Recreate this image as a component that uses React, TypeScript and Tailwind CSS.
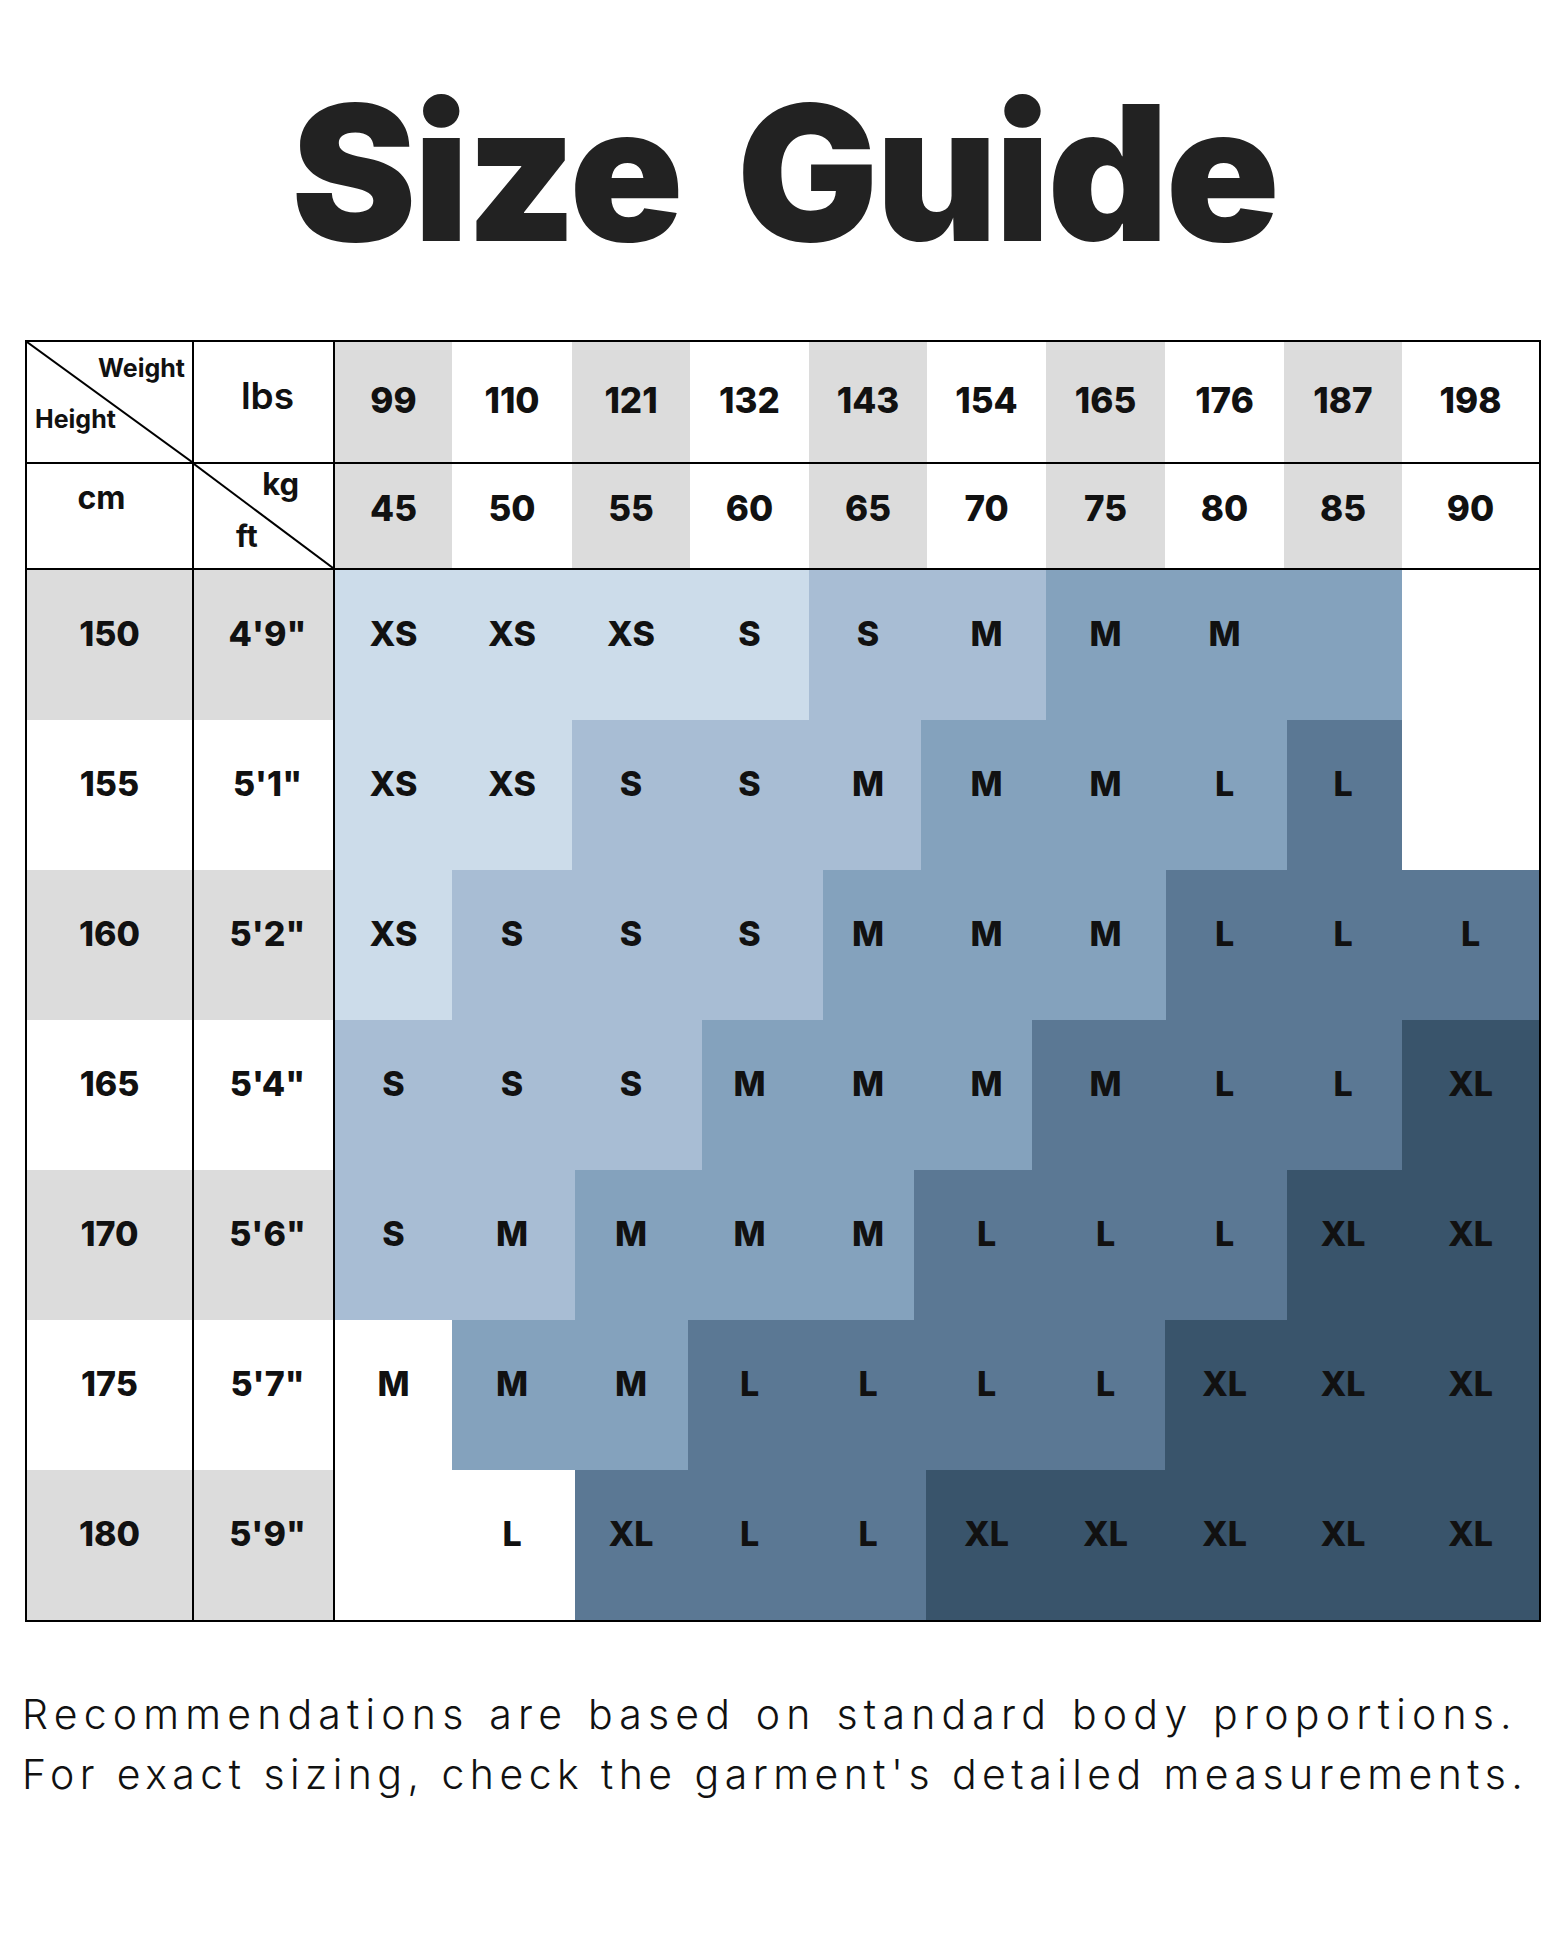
import React from "react";

const FILL: Record<number, string> = {
  0: "bg-white",
  1: "bg-[#ccdcea]",
  2: "bg-[#a8bdd4]",
  3: "bg-[#84a2bd]",
  4: "bg-[#5b7894]",
  5: "bg-[#39546b]",
};

const COLS = "grid-cols-[117px_120px_118px_119px_118px_119px_119px_119px_118px_1fr]";
const BODY_LEFT = 335;

const lbs = [99, 110, 121, 132, 143, 154, 165, 176, 187, 198];
const kg = [45, 50, 55, 60, 65, 70, 75, 80, 85, 90];

// each band: [shade, right edge in page px]
const rows: { cm: number; ft: string; sizes: string[]; bands: [number, number][] }[] = [
  { cm: 150, ft: "4'9\"", sizes: ["XS", "XS", "XS", "S", "S", "M", "M", "M", "", ""], bands: [[1, 809], [2, 1046], [3, 1402], [0, 1539]] },
  { cm: 155, ft: "5'1\"", sizes: ["XS", "XS", "S", "S", "M", "M", "M", "L", "L", ""], bands: [[1, 572], [2, 921], [3, 1287], [4, 1402], [0, 1539]] },
  { cm: 160, ft: "5'2\"", sizes: ["XS", "S", "S", "S", "M", "M", "M", "L", "L", "L"], bands: [[1, 452], [2, 823], [3, 1166], [4, 1539]] },
  { cm: 165, ft: "5'4\"", sizes: ["S", "S", "S", "M", "M", "M", "M", "L", "L", "XL"], bands: [[2, 702], [3, 1032], [4, 1402], [5, 1539]] },
  { cm: 170, ft: "5'6\"", sizes: ["S", "M", "M", "M", "M", "L", "L", "L", "XL", "XL"], bands: [[2, 575], [3, 914], [4, 1287], [5, 1539]] },
  { cm: 175, ft: "5'7\"", sizes: ["M", "M", "M", "L", "L", "L", "L", "XL", "XL", "XL"], bands: [[0, 452], [3, 688], [4, 1165], [5, 1539]] },
  { cm: 180, ft: "5'9\"", sizes: ["", "L", "XL", "L", "L", "XL", "XL", "XL", "XL", "XL"], bands: [[0, 575], [4, 926], [5, 1539]] },
];

function Diagonal() {
  return (
    <svg className="absolute inset-0 h-full w-full" viewBox="0 0 100 100" preserveAspectRatio="none">
      <line x1="0" y1="0" x2="100" y2="100" stroke="#000" strokeWidth="2" vectorEffect="non-scaling-stroke" />
    </svg>
  );
}

export default function App() {
  return (
    <div className="min-h-[1960px] w-[1568px] bg-white text-[#111] font-['Inter','Liberation_Sans',sans-serif]">
      <h1 className="pt-[79px] text-center text-[188px] font-black leading-none tracking-[-3px] text-[#222] [word-spacing:22px]">
        Size Guide
      </h1>

      <div className="ml-[25px] mt-[73px] w-[1516px] border-2 border-black">
        {/* lbs row */}
        <div className="flex h-[122px] border-b-2 border-black">
          <div className="relative w-[167px] shrink-0 border-r-2 border-black">
            <Diagonal />
            <span className="absolute right-[7px] top-[8px] text-[25px] font-bold">Weight</span>
            <span className="absolute left-[8px] top-[59px] text-[25px] font-bold">Height</span>
          </div>
          <div className="flex w-[141px] shrink-0 items-center justify-center border-r-2 border-black pb-3 pl-2 text-[37px] font-semibold">
            lbs
          </div>
          <div className={`grid flex-1 ${COLS}`}>
            {lbs.map((n, i) => (
              <div key={n} className={`flex items-center justify-center pb-1 text-[35px] font-extrabold ${i % 2 === 0 ? "bg-[#dcdcdc]" : "bg-white"}`}>
                {n}
              </div>
            ))}
          </div>
        </div>

        {/* kg row */}
        <div className="flex h-[106px] border-b-2 border-black">
          <div className="flex w-[167px] shrink-0 justify-center border-r-2 border-black pr-4 pt-[10px] text-[32px] font-bold">
            cm
          </div>
          <div className="relative w-[141px] shrink-0 border-r-2 border-black">
            <Diagonal />
            <span className="absolute right-[34px] top-[-3px] text-[31px] font-bold">kg</span>
            <span className="absolute left-[42px] top-[50px] text-[30px] font-bold">ft</span>
          </div>
          <div className={`grid flex-1 ${COLS}`}>
            {kg.map((n, i) => (
              <div key={n} className={`flex items-center justify-center pb-4 text-[35px] font-extrabold ${i % 2 === 0 ? "bg-[#dcdcdc]" : "bg-white"}`}>
                {n}
              </div>
            ))}
          </div>
        </div>

        {/* size rows */}
        {rows.map((r, ri) => {
          const shade = ri % 2 === 0 ? "bg-[#dcdcdc]" : "bg-white";
          let prev = BODY_LEFT;
          return (
            <div key={r.cm} className="flex h-[150px]">
              <div className={`flex w-[167px] shrink-0 items-center justify-center border-r-2 border-black pb-6 text-[34px] font-extrabold ${shade}`}>
                {r.cm}
              </div>
              <div className={`flex w-[141px] shrink-0 items-center justify-center border-r-2 border-black pb-6 pl-2 text-[34px] font-extrabold ${shade}`}>
                {r.ft}
              </div>
              <div className="grid flex-1">
                <div className="col-start-1 row-start-1 flex">
                  {r.bands.map(([lvl, end], bi) => {
                    const w = end - prev;
                    prev = end;
                    return <div key={bi} className={`shrink-0 ${FILL[lvl]}`} style={{ width: w }} />;
                  })}
                </div>
                <div className={`col-start-1 row-start-1 grid ${COLS}`}>
                  {r.sizes.map((s, i) => (
                    <div key={i} className="flex items-center justify-center pb-6 text-[34px] font-extrabold">
                      {s}
                    </div>
                  ))}
                </div>
              </div>
            </div>
          );
        })}
      </div>

      <div className="ml-[22px] mt-[62px] whitespace-nowrap text-[41px] font-light leading-[60px] text-[#111]">
        <p className="tracking-[6.2px] [word-spacing:2px]">Recommendations are based on standard body proportions.</p>
        <p className="tracking-[5.45px]">For exact sizing, check the garment's detailed measurements.</p>
      </div>
    </div>
  );
}
